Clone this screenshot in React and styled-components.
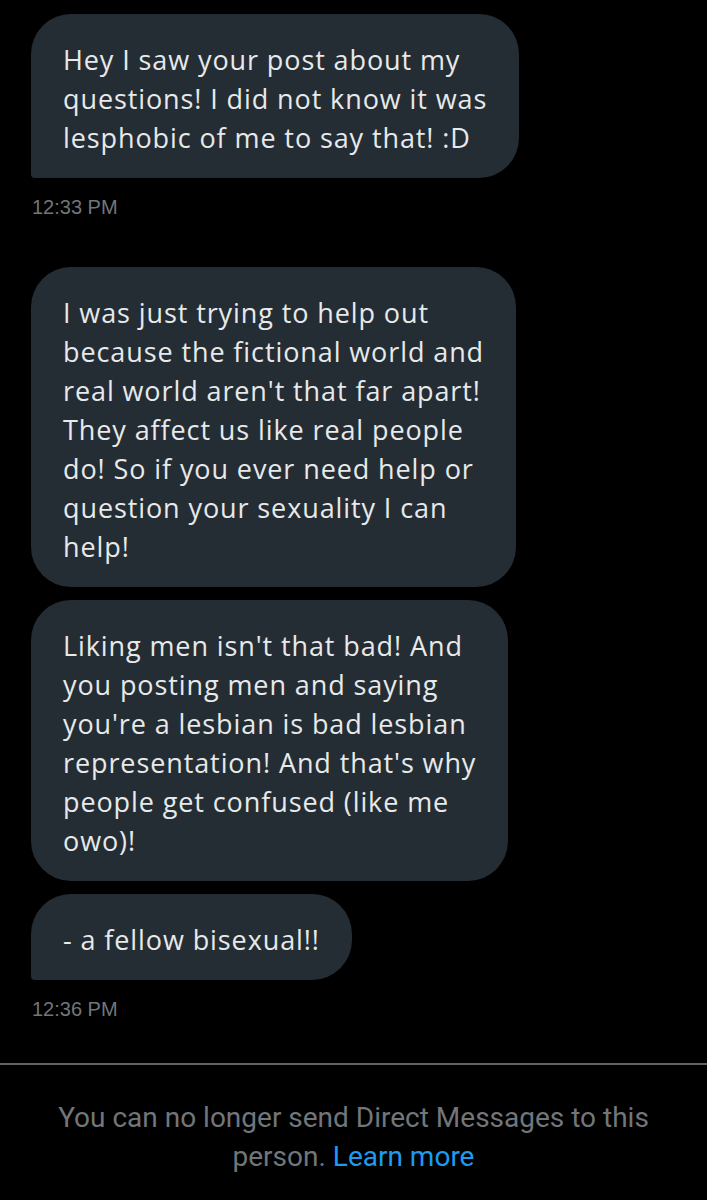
import React from 'react';
import styled, { createGlobalStyle } from 'styled-components';

const GlobalStyle = createGlobalStyle`
  html, body {
    margin: 0;
    padding: 0;
    background: #000;
  }
  body {
    font-family: Roboto, "Noto Sans", "Liberation Sans", sans-serif;
    -webkit-font-smoothing: antialiased;
  }
`;

const Page = styled.div`
  width: 707px;
  min-height: 1200px;
  background: #000;
  display: flex;
  flex-direction: column;
`;

const Thread = styled.div`
  display: flex;
  flex-direction: column;
  align-items: flex-start;
  padding: 14px 0 0 31px;
`;

const Group = styled.div`
  display: flex;
  flex-direction: column;
  align-items: flex-start;
  gap: 13px;
  margin-bottom: ${({ after }) => after}px;
`;

const Bubble = styled.div`
  background: #252d34;
  color: #e7e9ea;
  font-family: "Open Sans", "Noto Sans", sans-serif;
  font-size: 27px;
  line-height: 39px;
  letter-spacing: 0.9px;
  padding: 26px 32px 21px 32px;
  border-radius: ${({ tail }) => (tail ? '40px 40px 40px 4px' : '40px')};
`;

const Line = styled.span`
  display: block;
  white-space: nowrap;
`;

const Time = styled.div`
  margin-top: 2px;
  color: #71767b;
  font-family: "Liberation Sans", Arial, sans-serif;
  font-size: 20px;
  line-height: 28px;
  padding-left: 1px;
`;

const Divider = styled.div`
  margin-top: 40px;
  height: 2px;
  flex-shrink: 0;
  background: #5f6267;
`;

const Notice = styled.p`
  margin: 33px 0 0 0;
  padding: 0 30px;
  text-align: center;
  color: #71767b;
  font-size: 28px;
  line-height: 39px;
`;

const Link = styled.span`
  color: #1d9bf0;
`;

const groups = [
  {
    after: 46,
    time: '12:33 PM',
    bubbles: [
      ['Hey I saw your post about my', 'questions! I did not know it was', 'lesphobic of me to say that! :D'],
    ],
  },
  {
    after: 0,
    time: '12:36 PM',
    bubbles: [
      [
        'I was just trying to help out',
        'because the fictional world and',
        "real world aren't that far apart!",
        'They affect us like real people',
        'do! So if you ever need help or',
        'question your sexuality I can',
        'help!',
      ],
      [
        "Liking men isn't that bad! And",
        'you posting men and saying',
        "you're a lesbian is bad lesbian",
        "representation! And that's why",
        'people get confused (like me',
        'owo)!',
      ],
      ['- a fellow bisexual!!'],
    ],
  },
];

const App = () => (
  <>
    <GlobalStyle />
    <Page>
      <Thread>
        {groups.map((g, gi) => (
          <Group key={gi} after={g.after}>
            {g.bubbles.map((lines, bi) => (
              <Bubble key={bi} tail={bi === g.bubbles.length - 1}>
                {lines.map((l, li) => (
                  <Line key={li}>{l}</Line>
                ))}
              </Bubble>
            ))}
            <Time>{g.time}</Time>
          </Group>
        ))}
      </Thread>
      <Divider />
      <Notice>
        You can no longer send Direct Messages to this person. <Link>Learn more</Link>
      </Notice>
    </Page>
  </>
);

export default App;
